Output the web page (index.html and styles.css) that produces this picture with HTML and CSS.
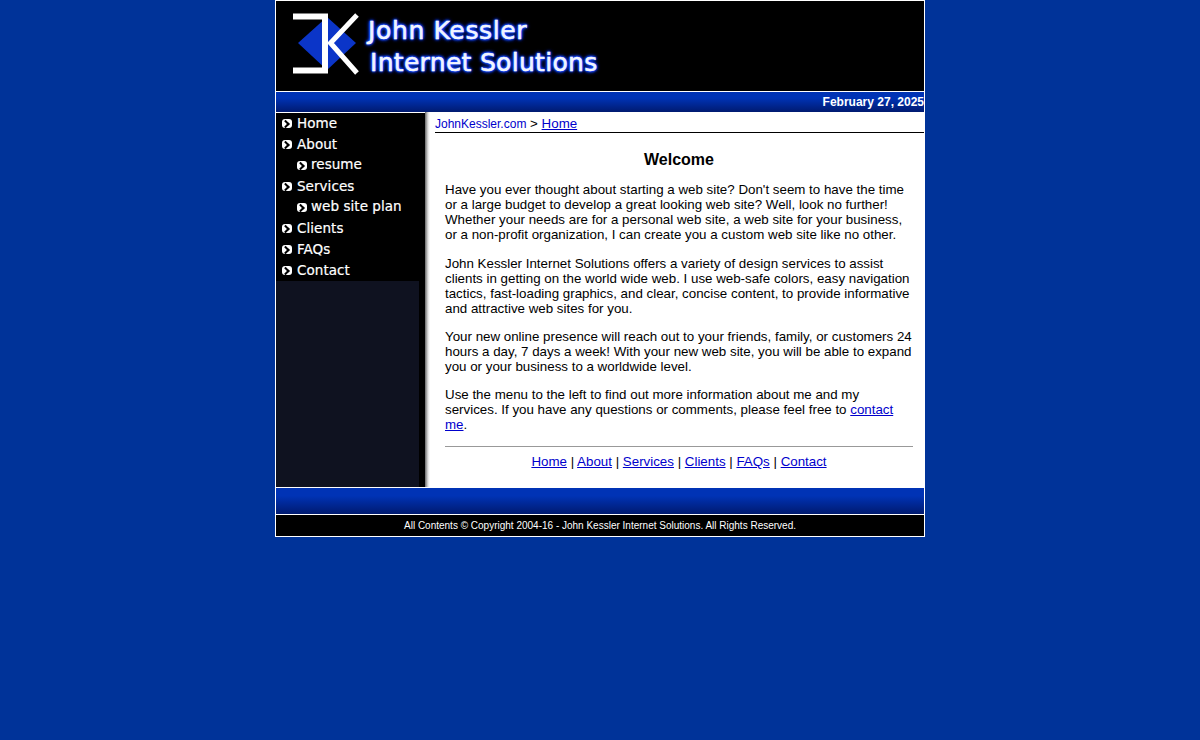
FILE: index.html
```html
<!DOCTYPE html>
<html lang="en">
<head>
<meta charset="utf-8">
<title>John Kessler Internet Solutions</title>
<link rel="stylesheet" href="styles.css">
</head>
<body>
<div class="page">
  <header class="masthead">
    <svg class="logo-mark" width="68" height="66" viewBox="0 0 68 66" aria-hidden="true">
      <polygon points="6,31 35,5 64,31 35,58" fill="#0b35c8"/>
      <path d="M1 4.5H33V58.5H1" fill="none" stroke="#fff" stroke-width="6"/>
      <path d="M65 3L38.5 31L65 61" fill="none" stroke="#fff" stroke-width="5"/>
    </svg>
    <div class="logo-text">
      <div class="logo-line1">John Kessler</div>
      <div class="logo-line2">Internet Solutions</div>
    </div>
  </header>
  <div class="datebar">February 27, 2025</div>
  <div class="middle">
    <nav class="sidebar">
      <ul class="menu">
        <li class="menu-item"><span class="bullet"></span>Home</li>
        <li class="menu-item"><span class="bullet"></span>About</li>
        <li class="menu-item sub"><span class="bullet"></span>resume</li>
        <li class="menu-item"><span class="bullet"></span>Services</li>
        <li class="menu-item sub"><span class="bullet"></span>web site plan</li>
        <li class="menu-item"><span class="bullet"></span>Clients</li>
        <li class="menu-item"><span class="bullet"></span>FAQs</li>
        <li class="menu-item"><span class="bullet"></span>Contact</li>
      </ul>
      <div class="side-fill"></div>
    </nav>
    <div class="shadow"></div>
    <main class="content">
      <div class="crumbs"><a class="crumb-home" href="#">JohnKessler.com</a> &gt; <a href="#">Home</a></div>
      <div class="article">
        <h1>Welcome</h1>
        <p class="first">Have you ever thought about starting a web site? Don't seem to have the time<br>or a large budget to develop a great looking web site? Well, look no further!<br>Whether your needs are for a personal web site, a web site for your business,<br>or a non-profit organization, I can create you a custom web site like no other.</p>
        <p class="second">John Kessler Internet Solutions offers a variety of design services to assist<br>clients in getting on the world wide web. I use web-safe colors, easy navigation<br>tactics, fast-loading graphics, and clear, concise content, to provide informative<br>and attractive web sites for you.</p>
        <p>Your new online presence will reach out to your friends, family, or customers 24<br>hours a day, 7 days a week! With your new web site, you will be able to expand<br>you or your business to a worldwide level.</p>
        <p>Use the menu to the left to find out more information about me and my<br>services. If you have any questions or comments, please feel free to <a href="#">contact<br>me</a>.</p>
        <hr>
        <div class="bottom-links"><a href="#">Home</a> | <a href="#">About</a> | <a href="#">Services</a> | <a href="#">Clients</a> | <a href="#">FAQs</a> | <a href="#">Contact</a></div>
      </div>
    </main>
  </div>
  <div class="bluebar"></div>
  <footer class="copyright">All Contents © Copyright 2004-16 - John Kessler Internet Solutions. All Rights Reserved.</footer>
</div>
</body>
</html>
```
FILE: styles.css
```css
* { box-sizing: border-box; }
html, body { margin: 0; padding: 0; }
body {
  background: #003399;
  font-family: "Liberation Sans", Arial, sans-serif;
  color: #000;
}
a { color: #0000cc; }
.page {
  width: 650px;
  margin: 0 auto;
  border: 1px solid #fff;
  background: #fff;
}
.masthead {
  height: 90px;
  background: #000;
  display: flex;
  align-items: flex-start;
  padding: 11px 0 0 16px;
}
.logo-mark { flex: none; }
.logo-text {
  margin-left: 8px;
  color: #eef3ff;
  font-family: "DejaVu Sans", sans-serif;
  font-size: 25px;
  line-height: 32px;
  -webkit-text-stroke: 0.5px #fff;
  text-shadow: 0 0 1px #1a49ff, 0 0 2px #1a49ff, 0 0 2px #1a49ff, 0 0 3px #1a49ff, 0 0 3px #1a49ff, 0 0 4px #1040f0, 0 0 4px #1040f0;
}
.logo-line1 { margin-top: 2px; line-height: 33px; letter-spacing: 0.65px; }
.logo-line2 { margin-left: 2px; letter-spacing: 0.3px; }
.datebar {
  margin-top: 1px;
  height: 20px;
  background: linear-gradient(#0033b5 0%, #0033b5 30%, #001a70 100%);
  color: #fff;
  font-size: 12px;
  font-weight: 700;
  line-height: 20px;
  text-align: right;
}
.middle {
  display: flex;
  height: 375px;
  background: #fff;
}
.sidebar {
  width: 149px;
  flex: none;
  display: flex;
  flex-direction: column;
  background: #000;
}
.menu {
  list-style: none;
  margin: 0;
  padding: 0;
  height: 169px;
  box-shadow: inset 0 1px 0 #fff;
}
.menu-item {
  height: 21px;
  display: flex;
  align-items: center;
  padding-left: 6px;
  color: #fff;
  font-family: "DejaVu Sans", sans-serif;
  font-size: 13.5px;
  letter-spacing: 0.05px;
  line-height: 20px;
  -webkit-text-stroke: 0.2px #fff;
}
.menu-item.sub { padding-left: 21px; padding-bottom: 2px; }
.menu-item.sub .bullet { margin-right: 4px; margin-top: 4px; }
.bullet {
  width: 10px;
  height: 9px;
  margin-top: 2px;
  margin-right: 5px;
  border-radius: 3px;
  background: #fff;
  position: relative;
  flex: none;
}
.bullet::after {
  content: "";
  position: absolute;
  left: 2px;
  top: 2px;
  width: 4px;
  height: 4px;
  border-top: 2px solid #000;
  border-right: 2px solid #000;
  transform: rotate(45deg) translate(-1px, 1px);
}
.side-fill {
  flex: 1;
  width: 143px;
  background: #0f1220;
}
.shadow {
  width: 5px;
  flex: none;
  background: linear-gradient(90deg, #666, #ddd 60%, #fff);
}
.content {
  flex: 1;
  min-width: 0;
  padding-left: 5px;
  font-size: 13.33px;
}
.crumbs {
  height: 21px;
  border-bottom: 1px solid #000;
  line-height: 23px;
}
.crumb-home { font-size: 12px; text-decoration: none; }
.article { padding: 0 11px 0 10px; }
h1 {
  margin: 17px 0 0;
  font-size: 16px;
  line-height: 20px;
  text-align: center;
  font-weight: 700;
}
p {
  margin: 13px 0 0;
  line-height: 15px;
  white-space: nowrap;
}
p.first { margin-top: 12px; }
p.second { margin-top: 14px; }
hr {
  margin: 14px 0 0;
  border: 0;
  border-top: 1px solid #999;
}
.bottom-links {
  margin-top: 7px;
  text-align: center;
  line-height: 16px;
}
.bluebar {
  margin-top: 1px;
  height: 26px;
  background: linear-gradient(#0033b5 0%, #0033b5 30%, #001a70 100%);
}
.copyright {
  height: 22px;
  border-top: 1px solid #fff;
  background: #000;
  color: #fff;
  font-size: 10px;
  line-height: 21px;
  text-align: center;
}
```
